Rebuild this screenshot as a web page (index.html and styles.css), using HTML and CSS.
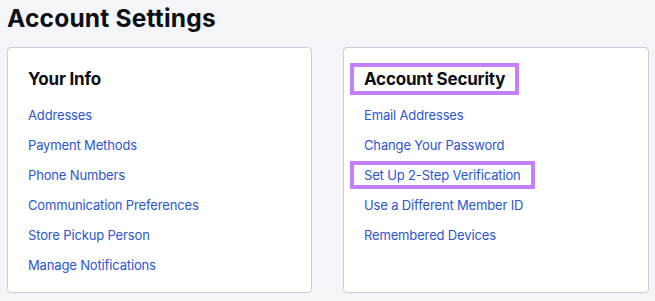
FILE: index.html
```html
<!DOCTYPE html>
<html lang="en">
<head>
<meta charset="utf-8">
<title>Account Settings</title>
<link rel="stylesheet" href="styles.css">
</head>
<body>
<main class="page">
  <h1 class="title">Account Settings</h1>
  <div class="cards">
    <section class="card">
      <h2 class="card-title">Your Info</h2>
      <ul class="links">
        <li><a href="#">Addresses</a></li>
        <li><a href="#">Payment Methods</a></li>
        <li><a href="#">Phone Numbers</a></li>
        <li><a href="#">Communication Preferences</a></li>
        <li><a href="#">Store Pickup Person</a></li>
        <li><a href="#">Manage Notifications</a></li>
      </ul>
    </section>
    <section class="card">
      <h2 class="card-title"><span class="hl">Account Security</span></h2>
      <ul class="links">
        <li><a href="#">Email Addresses</a></li>
        <li><a href="#">Change Your Password</a></li>
        <li><a href="#" class="hl">Set Up 2-Step Verification</a></li>
        <li><a href="#">Use a Different Member ID</a></li>
        <li><a href="#">Remembered Devices</a></li>
      </ul>
    </section>
  </div>
</main>
</body>
</html>
```

FILE: styles.css
```css
html, body {
  margin: 0;
  padding: 0;
  background: #f4f5f9;
}
body {
  font-family: Inter, "Noto Sans", "Liberation Sans", sans-serif;
  color: #0d0f14;
}
.page {
  padding: 4px 6px 0 7px;
}
.title {
  margin: 0 0 15px;
  font-size: 24.5px;
  line-height: 28px;
  font-weight: 700;
  letter-spacing: 0.2px;
}
.cards {
  display: grid;
  grid-template-columns: 305px 306px;
  column-gap: 31px;
}
.card {
  background: #fff;
  border: 1px solid #c9ccd9;
  border-radius: 4px;
  padding: 19px 20px 17px;
  height: 246px;
  box-sizing: border-box;
}
.card-title {
  margin: 0 0 14px;
  font-size: 17px;
  line-height: 24px;
  font-weight: 700;
  letter-spacing: -0.2px;
  white-space: nowrap;
}
.links {
  list-style: none;
  margin: 0;
  padding: 0;
  display: flex;
  flex-direction: column;
  gap: 10px;
}
.links li {
  font-size: 13px;
  line-height: 20px;
  letter-spacing: -0.15px;
  white-space: nowrap;
}
.links a {
  color: #2a55d5;
  text-decoration: none;
}
.hl {
  display: inline-block;
  padding: 0 10px;
  margin-left: -10px;
  outline: 4px solid #c57ff9;
}
```
